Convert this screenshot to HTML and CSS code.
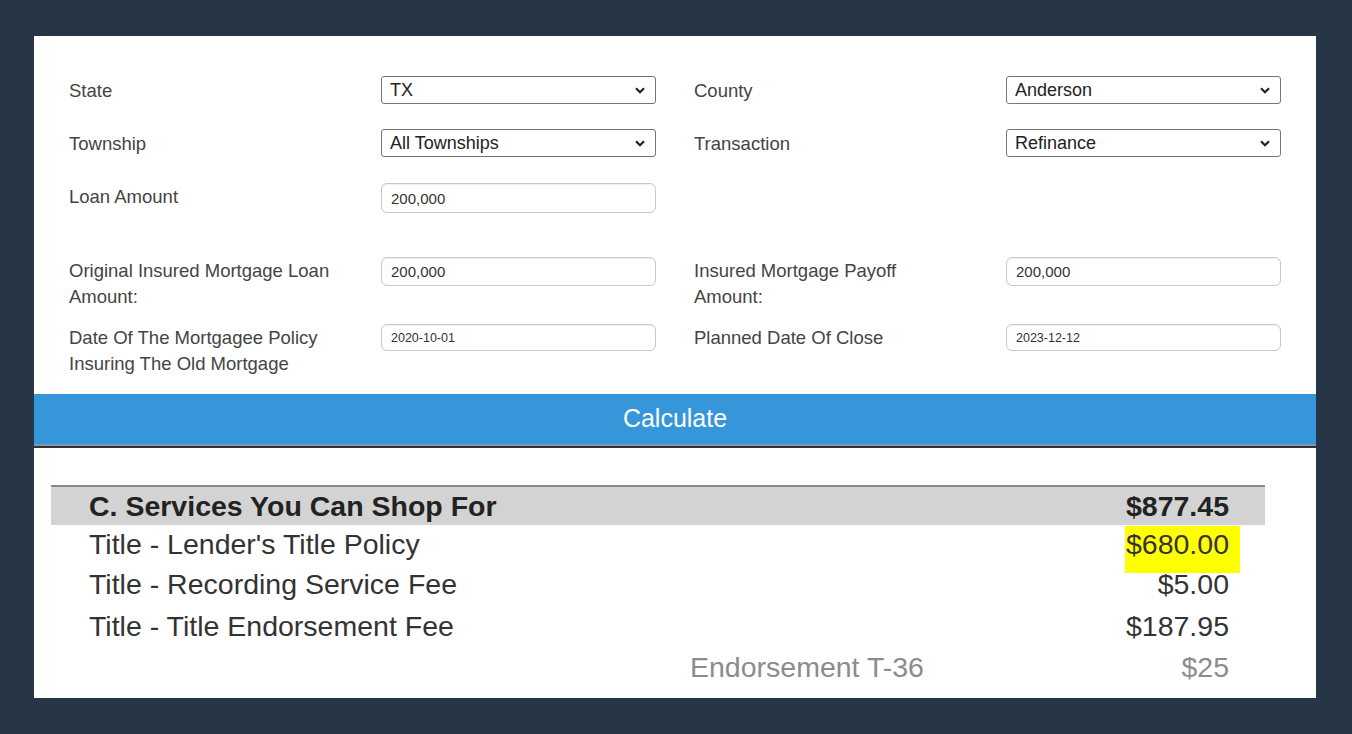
FILE: index.html
```html
<!DOCTYPE html>
<html>
<head>
<meta charset="utf-8">
<link rel="stylesheet" href="styles.css">
</head>
<body>
<div class="page">
  <section class="calc">
    <div class="form">
      <div class="row r1">
        <div class="label">State</div>
        <div class="sel"><select><option>TX</option></select><svg class="chev" viewBox="0 0 10 7" width="10" height="7"><path d="M1 1.2 L5 5.2 L9 1.2" fill="none" stroke="#222" stroke-width="2.2"/></svg></div>
        <div></div>
        <div class="label">County</div>
        <div class="sel"><select><option>Anderson</option></select><svg class="chev" viewBox="0 0 10 7" width="10" height="7"><path d="M1 1.2 L5 5.2 L9 1.2" fill="none" stroke="#222" stroke-width="2.2"/></svg></div>
      </div>
      <div class="row r2">
        <div class="label">Township</div>
        <div class="sel"><select><option>All Townships</option></select><svg class="chev" viewBox="0 0 10 7" width="10" height="7"><path d="M1 1.2 L5 5.2 L9 1.2" fill="none" stroke="#222" stroke-width="2.2"/></svg></div>
        <div></div>
        <div class="label">Transaction</div>
        <div class="sel"><select><option>Refinance</option></select><svg class="chev" viewBox="0 0 10 7" width="10" height="7"><path d="M1 1.2 L5 5.2 L9 1.2" fill="none" stroke="#222" stroke-width="2.2"/></svg></div>
      </div>
      <div class="row r3">
        <div class="label">Loan Amount</div>
        <input class="txt" type="text" value="200,000">
      </div>
      <div class="row r4">
        <div class="label">Original Insured Mortgage Loan Amount:</div>
        <input class="txt" type="text" value="200,000">
        <div></div>
        <div class="label">Insured Mortgage Payoff<br>Amount:</div>
        <input class="txt" type="text" value="200,000">
      </div>
      <div class="row r5">
        <div class="label">Date Of The Mortgagee Policy Insuring The Old Mortgage</div>
        <input class="txt date" type="text" value="2020-10-01">
        <div></div>
        <div class="label">Planned Date Of Close</div>
        <input class="txt date" type="text" value="2023-12-12">
      </div>
    </div>
    <div class="calc-btn">Calculate</div>
  </section>
  <section class="results">
    <div class="table">
      <div class="trow head">
        <div class="name">C. Services You Can Shop For</div>
        <div class="sub"></div>
        <div class="amt">$877.45</div>
      </div>
      <div class="trow first">
        <div class="name">Title - Lender's Title Policy</div>
        <div class="sub"></div>
        <div class="amt"><span class="hl">$680.00</span></div>
      </div>
      <div class="trow">
        <div class="name">Title - Recording Service Fee</div>
        <div class="sub"></div>
        <div class="amt">$5.00</div>
      </div>
      <div class="trow">
        <div class="name">Title - Title Endorsement Fee</div>
        <div class="sub"></div>
        <div class="amt">$187.95</div>
      </div>
      <div class="trow minor">
        <div class="name"></div>
        <div class="sub">Endorsement T-36</div>
        <div class="amt">$25</div>
      </div>
    </div>
  </section>
</div>
</body>
</html>
```

FILE: styles.css
```css
html, body {
  margin: 0;
  padding: 0;
  background: #263646;
  height: 734px;
  overflow: hidden;
  font-family: "Liberation Sans", Arial, sans-serif;
}
.page {
  padding: 36px 0 0 34px;
  width: 1282px;
}
.calc {
  background: #fff;
}
.form {
  padding: 40px 35px 17px;
}
.row {
  display: grid;
  grid-template-columns: 312px 275px 38px 312px 275px;
  align-items: start;
}
.r2 { margin-top: 25px; }
.r3 { margin-top: 26px; }
.r4 { margin-top: 44px; }
.r5 { margin-top: 14px; }
.label {
  font-size: 18.5px;
  line-height: 26px;
  color: #444;
  padding-top: 1px;
  padding-right: 20px;
}
.r1 .label, .r2 .label { padding-top: 2px; }
.sel {
  position: relative;
  height: 28px;
}
.sel select {
  appearance: none;
  -webkit-appearance: none;
  width: 100%;
  height: 28px;
  box-sizing: border-box;
  border: 1px solid #767676;
  border-radius: 3px;
  background: #fff;
  font-family: "Liberation Sans", Arial, sans-serif;
  font-size: 18px;
  color: #222;
  padding: 0 0 0 8px;
  margin: 0;
}
.chev {
  position: absolute;
  right: 11px;
  top: 11px;
}
.txt {
  width: 275px;
  height: 30px;
  box-sizing: border-box;
  border: 1px solid #c8c8c8;
  border-radius: 6px;
  box-shadow: inset 0 1px 1px rgba(0,0,0,0.06);
  font-family: "Liberation Sans", Arial, sans-serif;
  font-size: 15px;
  color: #333;
  padding: 0 0 0 9px;
  margin: 0;
  background: #fff;
}
.r4 .txt { height: 29px; }
.txt.date {
  height: 27px;
  font-size: 12.5px;
}
.calc-btn {
  height: 50px;
  background: #3597d9;
  color: #fff;
  font-size: 25px;
  line-height: 48px;
  text-align: center;
  border-bottom: 2px solid #8e949a;
}
.results {
  margin-top: 2px;
  background: #fff;
  height: 250px;
  padding: 37px 51px 0 17px;
  box-sizing: border-box;
}
.trow {
  display: grid;
  grid-template-columns: 601px 1fr auto;
  height: 41.5px;
  align-items: center;
  padding: 0 36px 0 38px;
  font-size: 28.5px;
  color: #333;
}
.trow.head {
  height: 38px;
  border-top: 2px solid #888;
  background: #d3d3d3;
  font-weight: bold;
  color: #222;
}
.trow.first {
  height: 39px;
}
.amt {
  text-align: right;
}
.hl {
  background: #ffff00;
  padding: 2px 11px 13px 1px;
  margin-right: -11px;
}
.minor {
  color: #8c8c8c;
}
.sub {
  white-space: nowrap;
}
```
